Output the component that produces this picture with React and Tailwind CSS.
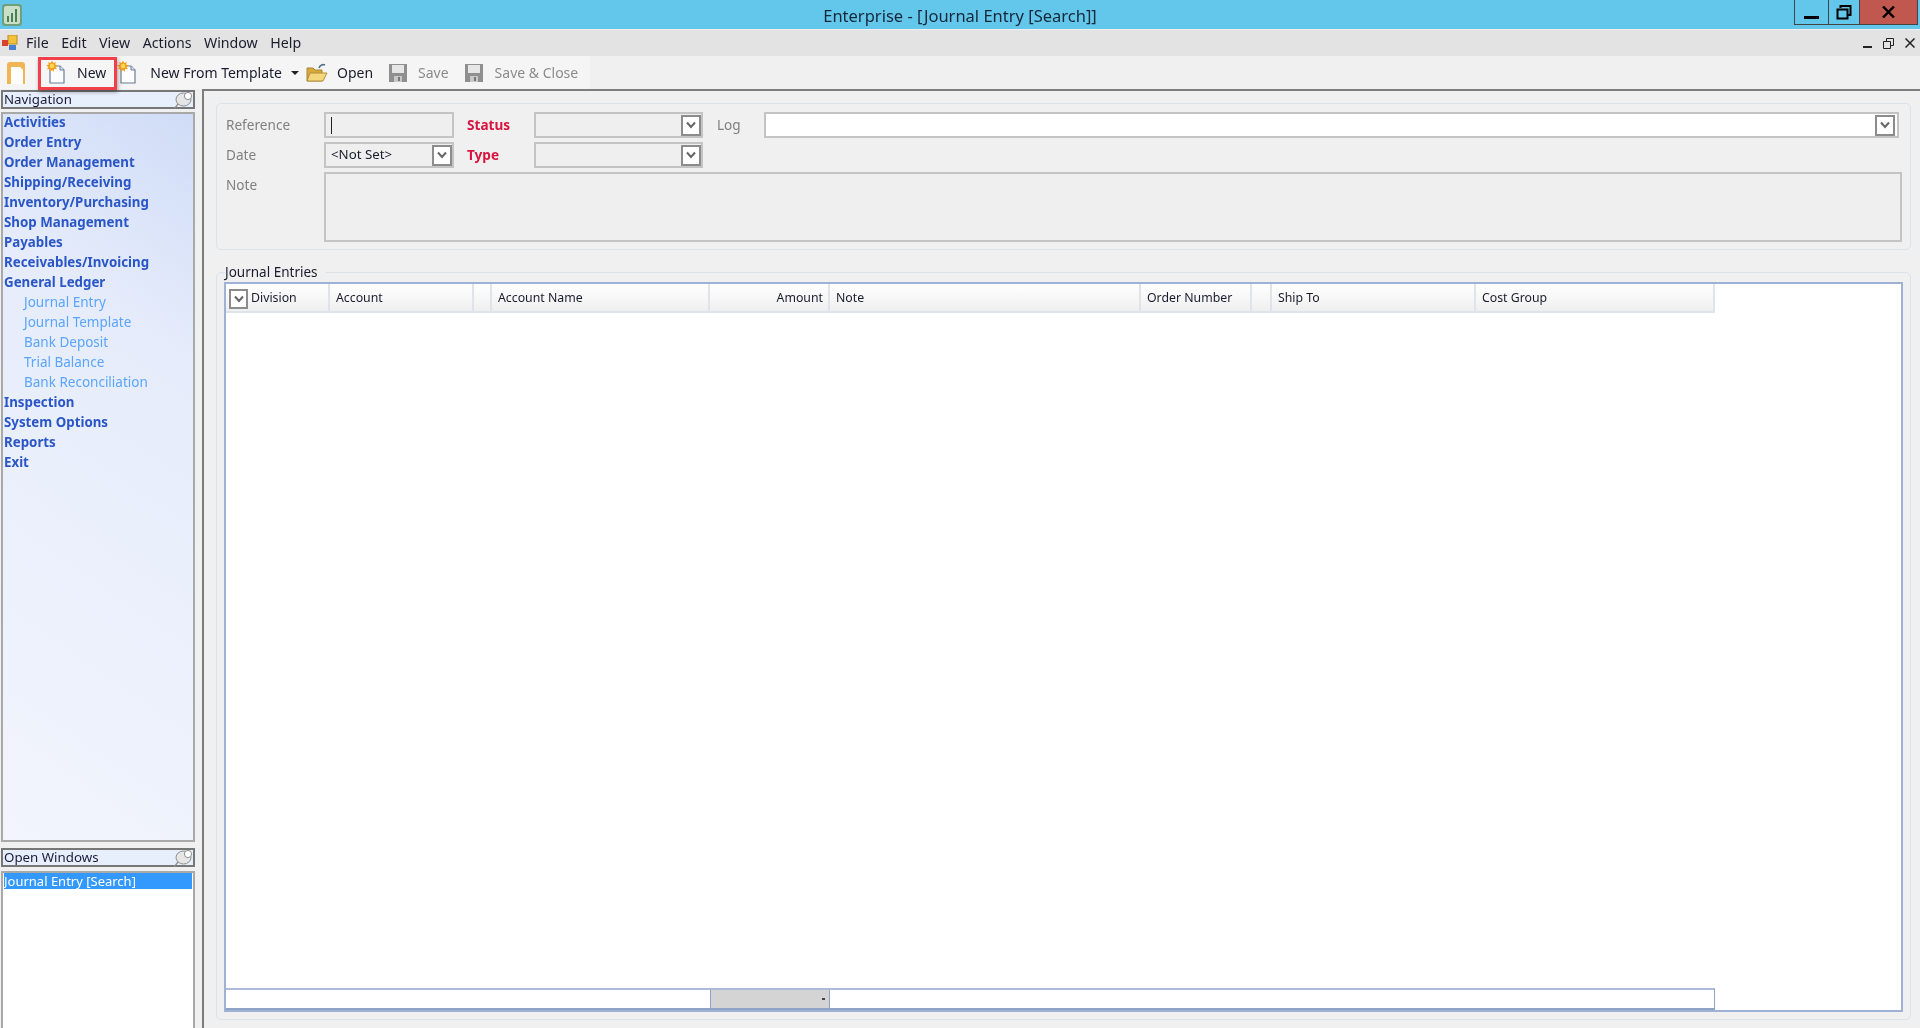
import React from 'react';

const navItems = [
  { label: 'Activities' },
  { label: 'Order Entry' },
  { label: 'Order Management' },
  { label: 'Shipping/Receiving' },
  { label: 'Inventory/Purchasing' },
  { label: 'Shop Management' },
  { label: 'Payables' },
  { label: 'Receivables/Invoicing' },
  { label: 'General Ledger' },
  { label: 'Journal Entry', sub: true },
  { label: 'Journal Template', sub: true },
  { label: 'Bank Deposit', sub: true },
  { label: 'Trial Balance', sub: true },
  { label: 'Bank Reconciliation', sub: true },
  { label: 'Inspection' },
  { label: 'System Options' },
  { label: 'Reports' },
  { label: 'Exit' },
];

const menus = ['File', 'Edit', 'View', 'Actions', 'Window', 'Help'];

const columns = [
  { label: 'Division', width: 'w-[104px]', hasToggle: true },
  { label: 'Account', width: 'w-[144px]' },
  { label: '', width: 'w-[18px]' },
  { label: 'Account Name', width: 'w-[218px]' },
  { label: 'Amount', width: 'w-[120px]', right: true },
  { label: 'Note', width: 'w-[311px]' },
  { label: 'Order Number', width: 'w-[111px]' },
  { label: '', width: 'w-[20px]' },
  { label: 'Ship To', width: 'w-[204px]' },
  { label: 'Cost Group', width: 'w-[239px]' },
];

const DocIcon = () => (
  <svg width="20" height="25" viewBox="0 0 20 25">
    <path d="M4 6h10l4 4v13H4z" fill="#fdfdfd" stroke="#6b7f9a" strokeWidth="1.2" />
    <path d="M14 6v4h4" fill="#dfe6ee" stroke="#6b7f9a" strokeWidth="1" />
    <path
      d="M6 .5l1.300 2.400 2.500-1-.6 2.600 2.600.9-2.200 1.600 1.300 2.300-2.700-.2-.5 2.700L6 9.900l-1.700 1.900-.5-2.700-2.700.2 1.300-2.300L.2 5.400l2.600-.9-.6-2.600 2.500 1z"
      fill="#f2a01e"
    />
    <circle cx="6" cy="6" r="2.300" fill="#fcd553" />
  </svg>
);

const FolderIcon = () => (
  <svg width="22" height="20" viewBox="0 0 22 20">
    <path d="M1 5h6l2 2h7v11H1z" fill="#d9a93c" stroke="#a88433" />
    <path d="M4 10h17l-4 8H1z" fill="#f4d67c" stroke="#b48e3a" />
    <path d="M13 5c1-3 4-4 6-3" fill="none" stroke="#55708f" strokeWidth="1.6" />
  </svg>
);

const FloppyIcon = () => (
  <svg width="18" height="18" viewBox="0 0 18 18">
    <path d="M0 0h18v18H0z" fill="#8f8f8f" />
    <path d="M3 1h12v8H3z" fill="#e6e6e6" />
    <path d="M5 12h8v6H5z" fill="#c8c8c8" />
    <path d="M9 13h2v4H9z" fill="#777" />
  </svg>
);

const PinIcon = () => (
  <svg width="20" height="18" viewBox="0 0 20 18" className="shrink-0">
    <path d="M1 18l5-6" stroke="#8a8a8a" strokeWidth="1.2" />
    <ellipse cx="10.500" cy="8.500" rx="7.500" ry="6.500" fill="#e6e6e6" stroke="#8f8f8f" />
    <circle cx="15" cy="5" r="3.600" fill="#fff" stroke="#8f8f8f" />
  </svg>
);

const DropButton = ({ className = '' }) => (
  <div className={`w-5 h-[21px] shrink-0 bg-white border-2 border-[#8c8c8c] flex items-center justify-center ${className}`}>
    <svg width="10" height="8" viewBox="0 0 10 8">
      <path d="M1 1.500l4 4.500 4-4.500" fill="none" stroke="#666" strokeWidth="2" />
    </svg>
  </div>
);

const Field = ({ className = '', children }) => (
  <div className={`h-[26px] border-2 border-[#c4c4c4] bg-[#efefef] flex items-center justify-between pl-[5px] ${className}`}>
    {children}
  </div>
);

const PanelHeader = ({ title }) => (
  <div className="h-[19px] mx-[1px] border-2 border-[#777] bg-[#e8effc] flex items-center justify-between pl-[1px] text-[13.3px] leading-none text-[#1b1b3a]">
    <span>{title}</span>
    <PinIcon />
  </div>
);

const ToolButton = ({ icon, label, disabled, className = '' }) => (
  <div className={`flex items-center ${className}`}>
    {icon}
    <span className={`text-[14px] ${disabled ? 'text-[#8b8b8b]' : 'text-[#1b1b2e]'}`}>{label}</span>
  </div>
);

export default function App() {
  return (
    <div className="w-[1920px] h-[1028px] flex flex-col overflow-hidden bg-[#f0f0f0] text-[#1b1b2e] font-['Noto_Sans',sans-serif] blur-[0.35px]">
      {/* Title bar */}
      <div className="h-[29px] shrink-0 bg-[#63c7eb] grid grid-cols-[1fr_auto_1fr]">
        <div className="pl-[2px] pt-[4px]">
          <svg width="20" height="22" viewBox="0 0 20 22">
            <rect x="0" y="0" width="20" height="22" rx="3" fill="#6f9f7c" />
            <rect x="2" y="2" width="16" height="18" rx="2" fill="#c9dfc7" />
            <path d="M5 18v-6h2v6zM9 18V9h2v9zM13 18V5h2v13z" fill="#4d7f59" />
          </svg>
        </div>
        <div className="text-[16.5px] leading-[32px] text-[#14283a]">Enterprise - [Journal Entry [Search]]</div>
        <div className="flex justify-end pr-[2px]">
          <div className="h-[25px] flex border border-t-0 border-[#444]">
            <div className="w-[34px] border-r border-[#444] flex items-end justify-center pb-[5px]">
              <div className="w-[15px] h-[3px] bg-black" />
            </div>
            <div className="w-[31px] border-r border-[#444] flex items-center justify-center">
              <svg width="16" height="15" viewBox="0 0 16 15">
                <path d="M1.500 4.500h10v9h-10zM4.500 3V1h10v9h-2" fill="none" stroke="#000" strokeWidth="2" />
              </svg>
            </div>
            <div className="w-[57px] bg-[#c1584f] flex items-center justify-center">
              <svg width="13" height="12" viewBox="0 0 13 12">
                <path d="M1 .5l11 11M12 .5l-11 11" stroke="#000" strokeWidth="2.400" />
              </svg>
            </div>
          </div>
        </div>
      </div>

      {/* Menu bar */}
      <div className="h-[26px] shrink-0 mt-[1px] bg-[#e3e3e3] flex items-center text-[14.2px]">
        <svg width="17" height="16" viewBox="0 0 17 16" className="ml-[2px] mr-[7px]">
          <rect x="6" y="0" width="9" height="9" fill="#f3c23c" stroke="#b98a1f" />
          <rect x="0" y="5" width="6" height="6" fill="#d8402f" />
          <rect x="7" y="10" width="7" height="5" fill="#4a7fd0" />
        </svg>
        <div className="flex gap-[12.5px]">
          {menus.map((m) => (
            <span key={m}>{m}</span>
          ))}
        </div>
        <div className="ml-auto flex items-center gap-[11px] pr-[5px]">
          <div className="w-[9px] h-[2px] mt-[8px] bg-[#222]" />
          <svg width="11" height="11" viewBox="0 0 11 11">
            <path d="M.5 3.500h7v7h-7zM3.500 3V.5h7v7H8" fill="none" stroke="#222" />
          </svg>
          <svg width="10" height="10" viewBox="0 0 10 10">
            <path d="M.5.5l9 9M9.500.5l-9 9" stroke="#222" strokeWidth="1.500" />
          </svg>
        </div>
      </div>

      {/* Toolbar */}
      <div className="h-[33px] shrink-0 flex">
        <div className="relative w-[590px] bg-[#f5f5f5] flex items-center">
          <svg width="20" height="24" viewBox="0 0 20 24" className="ml-[6px]">
            <path d="M1 23V4q0-3 3-3h12q3 0 3 3v19z" fill="#f0b655" />
            <path d="M5 23V7q0-1 1-1h8l3 3v14z" fill="#fff" />
          </svg>
          <ToolButton className="ml-[20px] gap-[11px]" icon={<DocIcon />} label="New" />
          <ToolButton className="ml-[11px] gap-[13px]" icon={<DocIcon />} label="New From Template" />
          <div className="ml-[9px] w-0 h-0 border-x-[4px] border-x-transparent border-t-[4px] border-t-[#222]" />
          <ToolButton className="ml-[7px] gap-[9px]" icon={<FolderIcon />} label="Open" />
          <ToolButton className="ml-[16px] gap-[11px]" icon={<FloppyIcon />} label="Save" disabled />
          <ToolButton className="ml-[16px] gap-[12px]" icon={<FloppyIcon />} label="Save & Close" disabled />
          {/* highlight around New */}
          <div className="absolute left-[38px] top-[1px] w-[79px] h-[33px] border-[3px] border-[#f2404a] shadow-[1px_2px_4px_rgba(0,0,0,0.35)]" />
        </div>
      </div>

      <div className="flex-1 flex min-h-0">
        {/* Sidebar */}
        <div className="w-[202px] shrink-0 flex flex-col pr-[6px]">
          <div className="mt-[1px]">
            <PanelHeader title="Navigation" />
          </div>
          <div className="mt-[3px] mx-[1px] h-[730px] border-2 border-[#a9a9a9] bg-[linear-gradient(215deg,#d0dcf7_0%,#e6ecfb_30%,#f2f5fd_100%)] pl-[1px]">
            <div className="-mt-[2px]">
              {navItems.map((item) => (
                <div
                  key={item.label}
                  className={
                    item.sub
                      ? 'h-5 leading-5 pl-5 text-[13.5px] text-[#5aa5ff]'
                      : 'h-5 leading-5 text-[13.3px] font-bold text-[#2a56c6]'
                  }
                >
                  {item.label}
                </div>
              ))}
            </div>
          </div>
          <div className="mt-[6px]">
            <PanelHeader title="Open Windows" />
          </div>
          <div className="mt-[4px] mx-[1px] flex-1 border-2 border-b-0 border-[#a9a9a9] bg-white px-[1px]">
            <div className="h-4 leading-4 bg-[#3399ff] text-white text-[13px]">Journal Entry [Search]</div>
          </div>
        </div>

        {/* Main */}
        <div className="flex-1 flex flex-col border-l-2 border-t-2 border-[#7d7d7d] pl-[12px] pr-[9px] pt-[12px] pb-[8px]">
          {/* Search criteria group */}
          <div className="h-[147px] shrink-0 border border-[#d9e3ec] rounded-[5px] pt-[8px] pl-[9px] pr-[11px] text-[13.6px]">
            <div className="flex items-center">
              <span className="w-[98px] text-[#808080]">Reference</span>
              <Field className="w-[130px]">
                <div className="w-[1px] h-[17px] bg-[#222]" />
              </Field>
              <span className="w-[67px] ml-[13px] font-bold text-[#d8143f]">Status</span>
              <Field className="w-[169px]">
                <span />
                <DropButton />
              </Field>
              <span className="w-[47px] ml-[14px] text-[#808080]">Log</span>
              <div className="flex-1 h-[26px] border-2 border-[#c4c4c4] bg-white flex items-center justify-end pr-[2px]">
                <DropButton />
              </div>
            </div>
            <div className="flex items-center mt-[4px]">
              <span className="w-[98px] text-[#808080]">Date</span>
              <Field className="w-[130px]">
                <span className="text-[13.3px]">&lt;Not Set&gt;</span>
                <DropButton />
              </Field>
              <span className="w-[67px] ml-[13px] font-bold text-[#d8143f]">Type</span>
              <Field className="w-[169px]">
                <span />
                <DropButton />
              </Field>
            </div>
            <div className="flex mt-[4px]">
              <span className="w-[98px] pt-[3px] text-[#808080]">Note</span>
              <div className="flex-1 h-[70px] -mr-[3px] border-2 border-[#c4c4c4] bg-[#efefef]" />
            </div>
          </div>

          {/* Journal Entries group */}
          <div className="flex-1 mt-[22px] border border-[#d9e3ec] rounded-[5px] px-[7px] pb-[7px] flex flex-col min-h-0">
            <div className="self-start -mt-[11px] ml-[1px] pr-[8px] bg-[#f0f0f0] text-[13.500px] leading-[20px] h-[20px]">Journal Entries</div>
            <div className="flex-1 border-2 border-[#9fb2d4] bg-white flex flex-col min-h-0">
              <div className="flex h-[29px] shrink-0 text-[12.3px]">
                {columns.map((col, i) => (
                  <div
                    key={i}
                    className={`${col.width} shrink-0 flex items-center border-r-2 border-b-2 border-[#dfe3ea] bg-gradient-to-b from-white to-[#efefef] pt-[2px] ${col.right ? 'justify-end pr-[5px]' : col.hasToggle ? 'pl-[5px]' : 'pl-[6px]'}`}
                  >
                    {col.hasToggle && <DropButton className="-ml-[2px] mr-[3px] !w-[19px] !h-[20px]" />}
                    {col.label}
                  </div>
                ))}
              </div>
              <div className="flex-1" />
              <div className="w-[1489px] h-[22px] flex border-t-2 border-b-2 border-t-[#aebbd8] border-b-[#8fa2c8] border-r border-r-[#8fa2c8]">
                <div className="w-[484px]" />
                <div className="w-[120px] border-x border-[#8fa2c8] bg-[#d4d4d4] flex items-center justify-end pr-[4px]">
                  <div className="w-[3px] h-[2px] bg-[#444]" />
                </div>
              </div>
            </div>
          </div>
        </div>
      </div>
    </div>
  );
}
